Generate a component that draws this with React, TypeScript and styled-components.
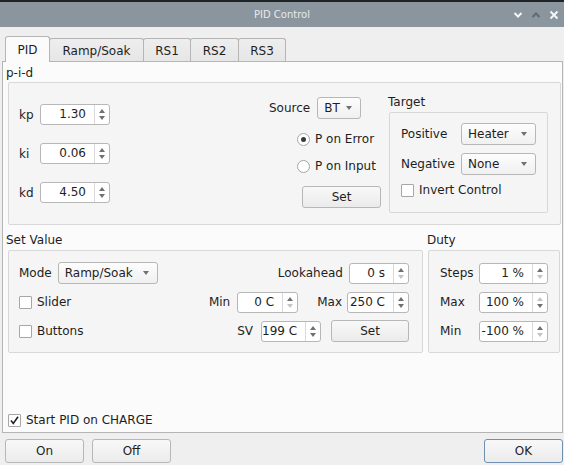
import React from 'react';
import styled, { createGlobalStyle } from 'styled-components';

const GlobalStyle = createGlobalStyle`
  html, body { margin: 0; padding: 0; background: #1f2326; }
  body {
    font-family: 'DejaVu Sans', 'Noto Sans', sans-serif;
    font-size: 12px;
    color: #1e1e1e;
  }
  * { box-sizing: border-box; }
`;

const Window = styled.div`
  width: 564px;
  height: 465px;
  background: #efefef;
  display: flex;
  flex-direction: column;
  overflow: hidden;
`;

const TitleBar = styled.div`
  flex: none;
  height: 27px;
  background: #8b959e;
  border-top: 2px solid #1f2326;
  display: grid;
  grid-template-columns: 1fr auto 1fr;
  align-items: center;
`;

const TitleText = styled.div`
  font-size: 10px;
  color: #e6e9ec;
  grid-column: 2;
`;

const TitleControls = styled.div`
  grid-column: 3;
  justify-self: end;
  display: flex;
  align-items: center;
  gap: 8px;
  padding-right: 5px;
`;

const Body = styled.div`
  flex: 1;
  display: flex;
  flex-direction: column;
  padding: 9px 1px 0 2px;
`;

const TabBar = styled.div`
  flex: none;
  height: 26px;
  margin-bottom: -1px;
  padding-left: 3px;
  display: flex;
  align-items: flex-end;
  position: relative;
  z-index: 1;
`;

const Tab = styled.div<{ $w: number; $active?: boolean }>`
  width: ${(p) => p.$w}px;
  height: ${(p) => (p.$active ? 26 : 23)}px;
  margin-bottom: ${(p) => (p.$active ? 0 : 1)}px;
  margin-left: -1px;
  &:first-child { margin-left: 0; }
  border: 1px solid #b5b5b5;
  border-bottom: none;
  border-radius: 3px 3px 0 0;
  background: ${(p) => (p.$active ? '#fbfbfb' : 'linear-gradient(#eeeeee, #e6e6e6)')};
  display: flex;
  align-items: center;
  justify-content: center;
  padding-top: ${(p) => (p.$active ? 0 : 1)}px;
  position: relative;
  z-index: ${(p) => (p.$active ? 2 : 1)};
`;

const Pane = styled.div`
  flex: none;
  height: 372px;
  border: 1px solid #b5b5b5;
  background: #fbfbfb;
  display: flex;
  flex-direction: column;
  padding: 4px 1px 0 3px;
`;

const GroupTitle = styled.div<{ $shift?: number; $top?: number }>`
  height: 16px;
  line-height: 14px;
  margin-left: ${(p) => p.$shift ?? 0}px;
  margin-top: ${(p) => p.$top ?? 0}px;
  white-space: nowrap;
`;

const Group = styled.div<{ $w?: number; $h: number; $left?: number; $top?: number }>`
  ${(p) => (p.$w ? `width: ${p.$w}px;` : '')}
  height: ${(p) => p.$h}px;
  margin-left: ${(p) => p.$left ?? 0}px;
  margin-top: ${(p) => p.$top ?? 0}px;
  border: 1px solid #d8d8d8;
  border-radius: 2px;
  background: #f5f5f5;
`;

const PidGroup = styled(Group)`
  display: flex;
  align-items: flex-start;
`;

const GainCol = styled.div`
  margin-left: 10px;
  margin-top: 21px;
  display: flex;
  flex-direction: column;
  gap: 18px;
`;

const GainRow = styled.div`
  display: flex;
  align-items: center;
  height: 21px;
`;

const GainLabel = styled.span`
  width: 21px;
`;

const MiddleCol = styled.div`
  margin-left: auto;
  margin-top: 14px;
  width: 113px;
  display: flex;
  flex-direction: column;
  align-items: flex-start;
`;

const SourceRow = styled.div`
  display: flex;
  align-items: center;
  gap: 7px;
  height: 22px;
`;

const RadioRow = styled.div<{ $top: number }>`
  display: flex;
  align-items: center;
  gap: 5px;
  height: 16px;
  margin-top: ${(p) => p.$top}px;
  padding-left: 28px;
`;

const RadioCircle = styled.span<{ $on?: boolean }>`
  width: 13px;
  height: 13px;
  border-radius: 50%;
  border: 1px solid #a6a6a6;
  background: #ffffff;
  display: flex;
  align-items: center;
  justify-content: center;
  &::after {
    content: '';
    width: 5px;
    height: 5px;
    border-radius: 50%;
    background: ${(p) => (p.$on ? '#3a3a3a' : 'transparent')};
  }
`;

const TargetCol = styled.div`
  width: 160px;
  margin-left: 6px;
  margin-right: 12px;
  display: flex;
  flex-direction: column;
`;

const TargetGrid = styled.div`
  display: grid;
  grid-template-columns: 54px 75px;
  grid-auto-rows: 22px;
  column-gap: 6px;
  row-gap: 8px;
  align-items: center;
  padding: 10px 0 0 11px;
`;

const CheckRow = styled.div<{ $top?: number; $left?: number }>`
  display: flex;
  align-items: center;
  gap: 5px;
  height: 16px;
  margin-top: ${(p) => p.$top ?? 0}px;
  margin-left: ${(p) => p.$left ?? 0}px;
`;

const CheckBoxBox = styled.span`
  width: 13px;
  height: 13px;
  border: 1px solid #a6a6a6;
  border-radius: 1px;
  background: #ffffff;
  display: flex;
  align-items: center;
  justify-content: center;
`;

const BottomRow = styled.div`
  display: flex;
  gap: 5px;
  margin-top: 8px;
  margin-left: 2px;
`;

const Column = styled.div`
  display: flex;
  flex-direction: column;
`;

const SetValueGroup = styled(Group)`
  display: flex;
  flex-direction: column;
  gap: 7px;
  padding: 11px 13px 0 10px;
`;

const FormRow = styled.div`
  display: flex;
  align-items: center;
  height: 22px;
`;

const PushRight = styled.span`
  margin-left: auto;
`;

const Gap = styled.span<{ $w: number }>`
  display: inline-block;
  width: ${(p) => p.$w}px;
  flex: none;
`;

const DutyGroup = styled(Group)`
  display: grid;
  grid-template-columns: 1fr 69px;
  grid-auto-rows: 22px;
  row-gap: 7px;
  align-items: center;
  align-content: start;
  padding: 11px 11px 0 11px;
`;

const Spacer = styled.div`
  flex: 1;
`;

const ChargeRow = styled(CheckRow)`
  margin-bottom: 4px;
`;

const ButtonRow = styled.div`
  display: flex;
  gap: 8px;
  margin-top: 6px;
  padding-left: 3px;
`;

const PushButton = styled.button<{ $w: number; $h?: number; $default?: boolean; $auto?: boolean }>`
  width: ${(p) => p.$w}px;
  height: ${(p) => p.$h ?? 22}px;
  margin-left: ${(p) => (p.$auto ? 'auto' : '0')};
  padding: 0;
  font-family: inherit;
  font-size: 12px;
  color: #1e1e1e;
  border: 1px solid ${(p) => (p.$default ? '#6f8fb0' : '#b7b7b7')};
  border-radius: 3px;
  background: linear-gradient(#f8f8f8, #ebebeb);
  display: flex;
  align-items: center;
  justify-content: center;
  flex: none;
`;

const SpinBox = styled.div<{ $w: number }>`
  width: ${(p) => p.$w}px;
  height: 21px;
  flex: none;
  display: flex;
  border: 1px solid #b7b7b7;
  border-radius: 3px;
  background: #ffffff;
`;

const SpinValue = styled.div`
  flex: 1;
  text-align: right;
  padding-right: 8px;
  line-height: 19px;
  white-space: nowrap;
`;

const SpinArrows = styled.div`
  width: 15px;
  border-left: 1px solid #d9d9d9;
  display: flex;
  flex-direction: column;
  align-items: center;
  justify-content: center;
  gap: 3px;
`;

const ArrowUp = styled.span<{ $off?: boolean }>`
  width: 0;
  height: 0;
  border-left: 3.5px solid transparent;
  border-right: 3.5px solid transparent;
  border-bottom: 4px solid ${(p) => (p.$off ? '#c4c4c4' : '#707070')};
`;

const ArrowDown = styled.span<{ $off?: boolean }>`
  width: 0;
  height: 0;
  border-left: 3.5px solid transparent;
  border-right: 3.5px solid transparent;
  border-top: 4px solid ${(p) => (p.$off ? '#c4c4c4' : '#707070')};
`;

const ComboBox = styled.div<{ $w: number }>`
  width: ${(p) => p.$w}px;
  height: 22px;
  flex: none;
  display: flex;
  align-items: center;
  justify-content: space-between;
  padding: 0 8px 0 6px;
  border: 1px solid #b7b7b7;
  border-radius: 3px;
  background: linear-gradient(#fdfdfd, #f0f0f0);
`;

const ComboArrow = styled.span`
  width: 0;
  height: 0;
  border-left: 3.5px solid transparent;
  border-right: 3.5px solid transparent;
  border-top: 4px solid #707070;
`;

type SpinProps = { value: string; w: number; upOff?: boolean; downOff?: boolean };
const Spin = ({ value, w, upOff, downOff }: SpinProps) => (
  <SpinBox $w={w}>
    <SpinValue>{value}</SpinValue>
    <SpinArrows>
      <ArrowUp $off={upOff} />
      <ArrowDown $off={downOff} />
    </SpinArrows>
  </SpinBox>
);

const Combo = ({ value, w }: { value: string; w: number }) => (
  <ComboBox $w={w}>
    <span>{value}</span>
    <ComboArrow />
  </ComboBox>
);

const Check = ({ on }: { on?: boolean }) => (
  <CheckBoxBox>
    {on && (
      <svg width="11" height="11" viewBox="0 0 11 11">
        <path d="M2 5.5 L4.3 8.5 L9 1.8" fill="none" stroke="#222" strokeWidth="1.6" />
      </svg>
    )}
  </CheckBoxBox>
);

const tabs = [
  { label: 'PID', w: 45, active: true },
  { label: 'Ramp/Soak', w: 95 },
  { label: 'RS1', w: 48 },
  { label: 'RS2', w: 49 },
  { label: 'RS3', w: 48 },
];

export default function App() {
  return (
    <>
      <GlobalStyle />
      <Window>
        <TitleBar>
          <TitleText>PID Control</TitleText>
          <TitleControls>
            <svg width="10" height="8" viewBox="0 0 10 8">
              <path d="M1.5 2 L5 5.5 L8.5 2" fill="none" stroke="#f4f6f8" strokeWidth="2" />
            </svg>
            <svg width="10" height="8" viewBox="0 0 10 8">
              <path d="M1.5 6 L5 2.5 L8.5 6" fill="none" stroke="#5f6973" strokeWidth="2" />
            </svg>
            <svg width="10" height="10" viewBox="0 0 10 10">
              <path d="M1.5 1.5 L8.5 8.5 M8.5 1.5 L1.5 8.5" fill="none" stroke="#f4f6f8" strokeWidth="2" />
            </svg>
          </TitleControls>
        </TitleBar>
        <Body>
          <TabBar>
            {tabs.map((t) => (
              <Tab key={t.label} $w={t.w} $active={t.active}>
                {t.label}
              </Tab>
            ))}
          </TabBar>
          <Pane>
            <GroupTitle>p-i-d</GroupTitle>
            <PidGroup $h={143} $left={2}>
              <GainCol>
                <GainRow>
                  <GainLabel>kp</GainLabel>
                  <Spin value="1.30" w={70} />
                </GainRow>
                <GainRow>
                  <GainLabel>ki</GainLabel>
                  <Spin value="0.06" w={70} />
                </GainRow>
                <GainRow>
                  <GainLabel>kd</GainLabel>
                  <Spin value="4.50" w={70} />
                </GainRow>
              </GainCol>
              <MiddleCol>
                <SourceRow>
                  <span>Source</span>
                  <Combo value="BT" w={44} />
                </SourceRow>
                <RadioRow $top={12}>
                  <RadioCircle $on />
                  <span>P on Error</span>
                </RadioRow>
                <RadioRow $top={11}>
                  <RadioCircle />
                  <span>P on Input</span>
                </RadioRow>
                <PushButton $w={79} style={{ marginTop: 12, marginLeft: 33 }}>
                  Set
                </PushButton>
              </MiddleCol>
              <TargetCol>
                <GroupTitle $top={12}>Target</GroupTitle>
                <Group $w={159} $h={101} $left={1} $top={1}>
                  <TargetGrid>
                    <span>Positive</span>
                    <Combo value="Heater" w={75} />
                    <span>Negative</span>
                    <Combo value="None" w={75} />
                  </TargetGrid>
                  <CheckRow $top={7} $left={11}>
                    <Check />
                    <span>Invert Control</span>
                  </CheckRow>
                </Group>
              </TargetCol>
            </PidGroup>
            <BottomRow>
              <Column>
                <GroupTitle $shift={-2}>Set Value</GroupTitle>
                <SetValueGroup $w={415} $h={103} $top={1}>
                  <FormRow>
                    <span>Mode</span>
                    <Gap $w={6} />
                    <Combo value="Ramp/Soak" w={100} />
                    <PushRight>Lookahead</PushRight>
                    <Gap $w={6} />
                    <Spin value="0 s" w={60} downOff />
                  </FormRow>
                  <FormRow>
                    <Check />
                    <Gap $w={5} />
                    <span>Slider</span>
                    <PushRight>Min</PushRight>
                    <Gap $w={7} />
                    <Spin value="0 C" w={61} downOff />
                    <Gap $w={19} />
                    <span>Max</span>
                    <Gap $w={5} />
                    <Spin value="250 C" w={62} />
                  </FormRow>
                  <FormRow>
                    <Check />
                    <Gap $w={5} />
                    <span>Buttons</span>
                    <PushRight>SV</PushRight>
                    <Gap $w={8} />
                    <Spin value="199 C" w={60} />
                    <Gap $w={10} />
                    <PushButton $w={78}>Set</PushButton>
                  </FormRow>
                </SetValueGroup>
              </Column>
              <Column>
                <GroupTitle $shift={-1}>Duty</GroupTitle>
                <DutyGroup $w={132} $h={103} $top={1}>
                  <span>Steps</span>
                  <Spin value="1 %" w={69} downOff />
                  <span>Max</span>
                  <Spin value="100 %" w={69} upOff />
                  <span>Min</span>
                  <Spin value="-100 %" w={69} downOff />
                </DutyGroup>
              </Column>
            </BottomRow>
            <Spacer />
            <ChargeRow $left={2}>
              <Check on />
              <span>Start PID on CHARGE</span>
            </ChargeRow>
          </Pane>
          <ButtonRow>
            <PushButton $w={79} $h={24}>On</PushButton>
            <PushButton $w={79} $h={24}>Off</PushButton>
            <PushButton $w={79} $h={24} $default $auto>OK</PushButton>
          </ButtonRow>
        </Body>
      </Window>
    </>
  );
}
